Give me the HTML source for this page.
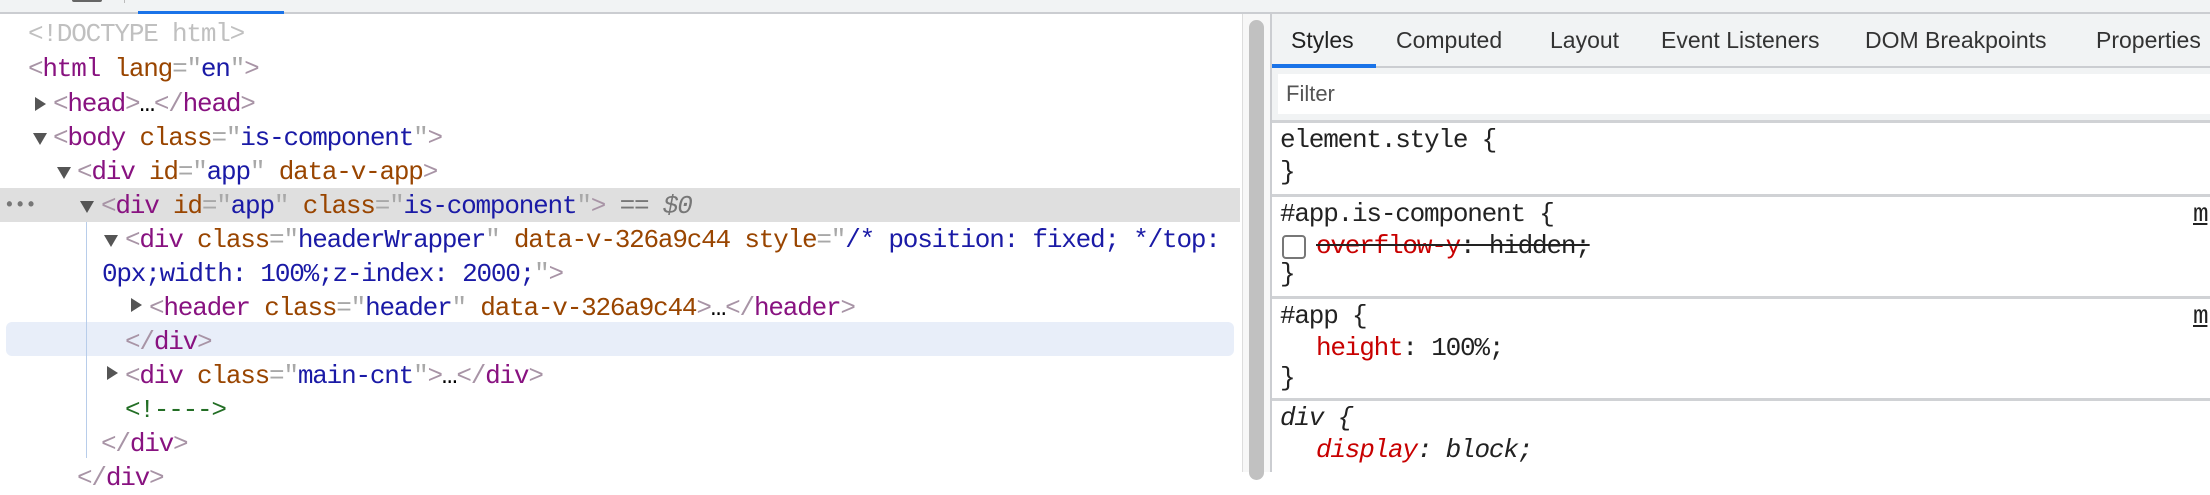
<!DOCTYPE html>
<html><head><meta charset="utf-8"><style>
*{margin:0;padding:0;box-sizing:border-box}
body{width:2210px;height:472px;overflow:hidden;background:#fff;position:relative;font-family:"Liberation Mono",monospace;font-size:26px;letter-spacing:-1.2px}
.a{position:absolute;white-space:pre;line-height:34px;height:34px}
.t{color:#881280}.b{color:#a894a6}.n{color:#994500}.v{color:#1a1aa6}.q{color:#a8a8a8}
.tri{position:absolute;width:0;height:0}
.r{border-top:7px solid transparent;border-bottom:7px solid transparent;border-left:11px solid #555}
.d{border-left:7px solid transparent;border-right:7px solid transparent;border-top:12px solid #555}
.s{font-family:"Liberation Sans",sans-serif;font-size:23px;letter-spacing:0;color:#333;position:absolute;top:27px;white-space:pre}
.sep{position:absolute;left:1272px;right:0;height:3px;background:#d0d2d5}
.p{color:#c80000}
</style></head><body>
<div style="position:absolute;left:0;top:0;width:2210px;height:12px;background:#f1f3f4"></div>
<div style="position:absolute;left:0;top:12px;width:2210px;height:2px;background:#cbcdd1"></div>
<div style="position:absolute;left:72px;top:0;width:30px;height:2px;background:#666;border-radius:0 0 2px 2px"></div>
<div style="position:absolute;left:124px;top:0;width:1px;height:3px;background:#bbb"></div>
<div style="position:absolute;left:138px;top:11px;width:146px;height:3px;background:#1a73e8"></div>

<div style="position:absolute;left:0;top:188px;width:1240px;height:34px;background:#dfdfdf"></div>
<div style="position:absolute;left:6px;top:322px;width:1228px;height:34px;background:#e8eef9;border-radius:6px"></div>
<div style="position:absolute;left:86px;top:222px;width:1px;height:236px;background:#b8cdea"></div>
<div class="a" style="left:4px;top:189px;color:#777;font-size:18px;font-weight:bold;letter-spacing:0">•••</div>

<div class="a" style="left:28px;top:17px;color:#c0c0c0">&lt;!DOCTYPE html&gt;</div>
<div class="a" style="left:28px;top:52px"><span class="b">&lt;</span><span class="t">html</span> <span class="n">lang</span><span class="q">="</span><span class="v">en</span><span class="q">"</span><span class="b">&gt;</span></div>
<div class="tri r" style="left:35px;top:97px"></div>
<div class="a" style="left:53px;top:87px"><span class="b">&lt;</span><span class="t">head</span><span class="b">&gt;</span>…<span class="b">&lt;/</span><span class="t">head</span><span class="b">&gt;</span></div>
<div class="tri d" style="left:33px;top:133px"></div>
<div class="a" style="left:53px;top:121px"><span class="b">&lt;</span><span class="t">body</span> <span class="n">class</span><span class="q">="</span><span class="v">is-component</span><span class="q">"</span><span class="b">&gt;</span></div>
<div class="tri d" style="left:57px;top:167px"></div>
<div class="a" style="left:77px;top:155px"><span class="b">&lt;</span><span class="t">div</span> <span class="n">id</span><span class="q">="</span><span class="v">app</span><span class="q">"</span> <span class="n">data-v-app</span><span class="b">&gt;</span></div>
<div class="tri d" style="left:80px;top:201px"></div>
<div class="a" style="left:101px;top:189px"><span class="b">&lt;</span><span class="t">div</span> <span class="n">id</span><span class="q">="</span><span class="v">app</span><span class="q">"</span> <span class="n">class</span><span class="q">="</span><span class="v">is-component</span><span class="q">"</span><span class="b">&gt;</span> <span style="color:#777">== <i>$0</i></span></div>
<div class="tri d" style="left:104px;top:235px"></div>
<div class="a" style="left:125px;top:223px"><span class="b">&lt;</span><span class="t">div</span> <span class="n">class</span><span class="q">="</span><span class="v">headerWrapper</span><span class="q">"</span> <span class="n">data-v-326a9c44</span> <span class="n">style</span><span class="q">="</span><span class="v">/* position: fixed; */top:</span></div>
<div class="a" style="left:102px;top:257px"><span class="v">0px;width: 100%;z-index: 2000;</span><span class="q">"</span><span class="b">&gt;</span></div>
<div class="tri r" style="left:131px;top:298px"></div>
<div class="a" style="left:149px;top:291px"><span class="b">&lt;</span><span class="t">header</span> <span class="n">class</span><span class="q">="</span><span class="v">header</span><span class="q">"</span> <span class="n">data-v-326a9c44</span><span class="b">&gt;</span>…<span class="b">&lt;/</span><span class="t">header</span><span class="b">&gt;</span></div>
<div class="a" style="left:125px;top:325px"><span class="b">&lt;/</span><span class="t">div</span><span class="b">&gt;</span></div>
<div class="tri r" style="left:107px;top:366px"></div>
<div class="a" style="left:125px;top:359px"><span class="b">&lt;</span><span class="t">div</span> <span class="n">class</span><span class="q">="</span><span class="v">main-cnt</span><span class="q">"</span><span class="b">&gt;</span>…<span class="b">&lt;/</span><span class="t">div</span><span class="b">&gt;</span></div>
<div class="a" style="left:125px;top:393px;color:#236e25">&lt;!----&gt;</div>
<div class="a" style="left:101px;top:427px"><span class="b">&lt;/</span><span class="t">div</span><span class="b">&gt;</span></div>
<div class="a" style="left:77px;top:461px"><span class="b">&lt;/</span><span class="t">div</span><span class="b">&gt;</span></div>

<div style="position:absolute;left:1242px;top:14px;width:1px;height:458px;background:#ddd"></div>
<div style="position:absolute;left:1243px;top:14px;width:27px;height:458px;background:#f7f7f7"></div>
<div style="position:absolute;left:1249px;top:20px;width:15px;height:460px;background:#c1c1c1;border-radius:8px"></div>
<div style="position:absolute;left:1270px;top:14px;width:2px;height:458px;background:#cbcdd1"></div>

<div style="position:absolute;left:1272px;top:14px;width:938px;height:52px;background:#f1f3f4"></div>
<div style="position:absolute;left:1272px;top:66px;width:938px;height:2px;background:#cbcdd1"></div>
<div style="position:absolute;left:1272px;top:64px;width:104px;height:4px;background:#1a73e8"></div>
<div class="s" style="left:1291px;color:#222">Styles</div>
<div class="s" style="left:1396px">Computed</div>
<div class="s" style="left:1550px">Layout</div>
<div class="s" style="left:1661px">Event Listeners</div>
<div class="s" style="left:1865px">DOM Breakpoints</div>
<div class="s" style="left:2096px">Properties</div>

<div style="position:absolute;left:1272px;top:68px;width:938px;height:52px;background:#f1f3f4"></div>
<div style="position:absolute;left:1278px;top:74px;width:932px;height:40px;background:#fff"></div>
<div class="s" style="left:1286px;top:81px;color:#555;font-size:22px">Filter</div>

<div class="sep" style="top:120px"></div>
<div class="a" style="left:1280px;top:123px;color:#222">element.style {</div>
<div class="a" style="left:1280px;top:155px;color:#222">}</div>
<div class="sep" style="top:194px"></div>
<div class="a" style="left:1280px;top:197px;color:#222">#app.is-component {</div>
<div style="position:absolute;left:1282px;top:235px;width:24px;height:24px;border:2px solid #777;border-radius:4px"></div>
<div class="a" style="left:1316px;top:229px;color:#222;text-decoration:line-through"><span class="p">overflow-y</span>: hidden;</div>
<div class="a" style="left:1280px;top:257px;color:#222">}</div>
<div class="a" style="left:2193px;top:197px;color:#222;text-decoration:underline">m</div>
<div class="sep" style="top:296px"></div>
<div class="a" style="left:1280px;top:299px;color:#222">#app {</div>
<div class="a" style="left:2193px;top:299px;color:#222;text-decoration:underline">m</div>
<div class="a" style="left:1316px;top:331px;color:#222"><span class="p">height</span>: 100%;</div>
<div class="a" style="left:1280px;top:361px;color:#222">}</div>
<div class="sep" style="top:398px"></div>
<div class="a" style="left:1280px;top:401px;color:#222;font-style:italic">div {</div>
<div class="a" style="left:1316px;top:433px;color:#222;font-style:italic"><span class="p">display</span>: block;</div>
</body></html>
